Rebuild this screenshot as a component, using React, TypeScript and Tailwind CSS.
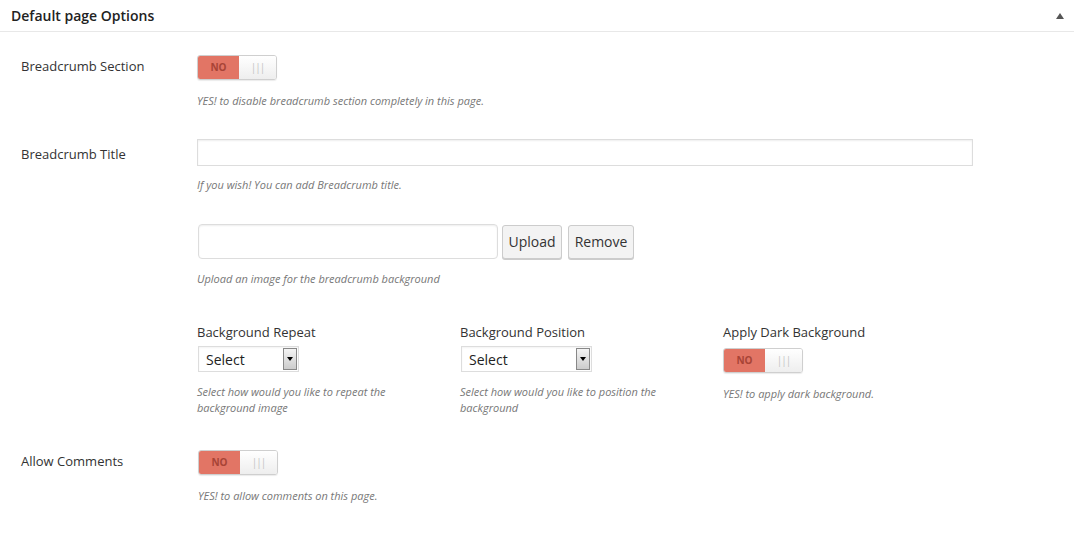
import React from 'react';

function Toggle() {
  return (
    <div className="flex h-[25px] w-[80px] rounded-[3px] border border-[#cfcfcf] overflow-hidden shadow-[0_1px_1px_rgba(0,0,0,0.08)]">
      <div className="w-[41px] bg-[#e27565] flex items-center justify-center text-[10px] font-bold text-[#a84436]">NO</div>
      <div className="flex-1 bg-gradient-to-b from-white to-[#eeeeee] flex items-center justify-center text-[10px] text-[#c4c4c4] tracking-[-1px]">|||</div>
    </div>
  );
}

function Desc({ children, className = '' }: { children: React.ReactNode; className?: string }) {
  return <p className={`text-[11px] italic leading-[16px] text-[#777777] ${className}`}>{children}</p>;
}

function Select({ width }: { width: string }) {
  return (
    <div className={`flex h-[26px] ${width} border border-[#dddddd] bg-white items-center shadow-[inset_0_1px_2px_rgba(0,0,0,0.05)]`}>
      <span className="flex-1 pl-[7px] text-[14px] text-[#222222]">Select</span>
      <div className="mr-[1px] h-[22px] w-[14px] border border-[#888888] bg-gradient-to-b from-[#f4f4f4] to-[#cccccc] flex items-center justify-center">
        <div className="w-0 h-0 border-l-[3px] border-r-[3px] border-t-[4px] border-l-transparent border-r-transparent border-t-black" />
      </div>
    </div>
  );
}

export default function App() {
  return (
    <div className="w-[1074px] h-[538px] bg-white font-['Open_Sans',sans-serif] text-[#333333]">
      <div className="h-[32px] border-b border-[#e8e8e8] flex items-center justify-between pl-[11px] pr-[10px]">
        <h2 className="text-[14px] font-semibold text-[#222222]">Default page Options</h2>
        <div className="w-0 h-0 border-l-[4px] border-r-[4px] border-b-[6px] border-l-transparent border-r-transparent border-b-[#555555]" />
      </div>

      <div className="pl-[21px] pt-[23px]">
        <div className="flex">
          <div className="w-[176px] pt-[1px] text-[13px] leading-[20px]">Breadcrumb Section</div>
          <div className="flex flex-col">
            <Toggle />
            <Desc className="mt-[13px]">YES! to disable breadcrumb section completely in this page.</Desc>
          </div>
        </div>

        <div className="flex mt-[30px]">
          <div className="w-[176px] pt-[5px] text-[13px] leading-[20px]">Breadcrumb Title</div>
          <div className="flex flex-col">
            <input className="h-[27px] w-[776px] border border-[#dddddd] shadow-[inset_0_1px_2px_rgba(0,0,0,0.07)] outline-none" />
            <Desc className="mt-[11px]">If you wish! You can add Breadcrumb title.</Desc>

            <div className="flex items-center gap-[4px] mt-[31px] ml-[1px]">
              <input className="h-[35px] w-[300px] rounded-[4px] border border-[#dddddd] shadow-[inset_0_1px_2px_rgba(0,0,0,0.07)] outline-none" />
              <button className="h-[34px] w-[60px] rounded-[3px] border border-[#cccccc] bg-[#f3f3f3] text-[14px] text-[#333333] shadow-[0_1px_0_#cccccc]">Upload</button>
              <button className="h-[34px] w-[66px] ml-[2px] rounded-[3px] border border-[#cccccc] bg-[#f3f3f3] text-[14px] text-[#333333] shadow-[0_1px_0_#cccccc]">Remove</button>
            </div>
            <Desc className="mt-[12px]">Upload an image for the breadcrumb background</Desc>

            <div className="grid grid-cols-[263px_263px_263px] mt-[35px]">
              <div className="flex flex-col">
                <div className="text-[13px] leading-[20px]">Background Repeat</div>
                <div className="mt-[4px] ml-[1px]"><Select width="w-[101px]" /></div>
                <Desc className="mt-[12px] w-[205px]">Select how would you like to repeat the background image</Desc>
              </div>
              <div className="flex flex-col">
                <div className="text-[13px] leading-[20px]">Background Position</div>
                <div className="mt-[4px] ml-[1px]"><Select width="w-[131px]" /></div>
                <Desc className="mt-[12px] w-[205px]">Select how would you like to position the background</Desc>
              </div>
              <div className="flex flex-col">
                <div className="text-[13px] leading-[20px]">Apply Dark Background</div>
                <div className="mt-[6px]"><Toggle /></div>
                <Desc className="mt-[13px]">YES! to apply dark background.</Desc>
              </div>
            </div>
          </div>
        </div>

        <div className="flex mt-[34px]">
          <div className="w-[177px] pt-[1px] text-[13px] leading-[20px]">Allow Comments</div>
          <div className="flex flex-col">
            <Toggle />
            <Desc className="mt-[13px]">YES! to allow comments on this page.</Desc>
          </div>
        </div>
      </div>
    </div>
  );
}
